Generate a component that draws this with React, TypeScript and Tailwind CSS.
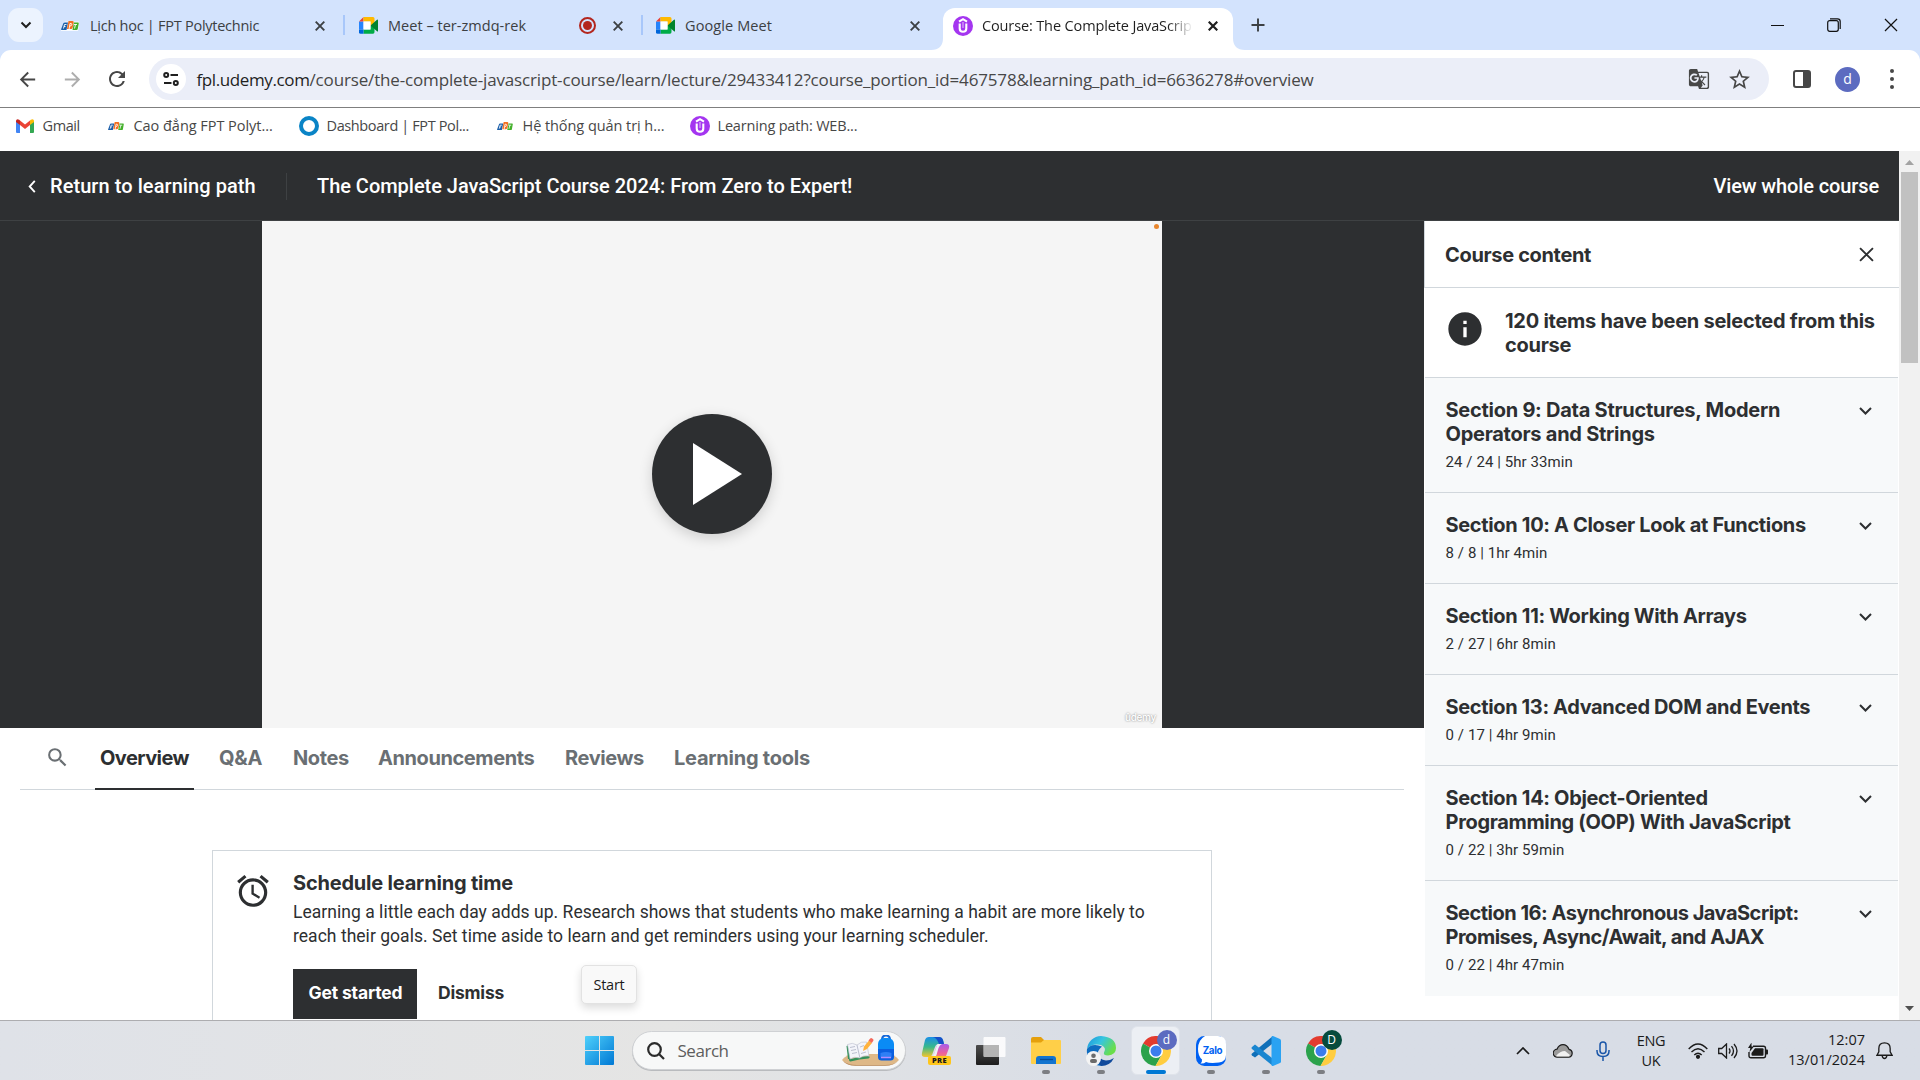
import type { ReactNode } from "react";
import {
  MdAccessAlarm,
  MdArrowBack,
  MdArrowForward,
  MdGTranslate,
  MdInfo,
  MdRefresh,
  MdSearch,
  MdStarBorder,
} from "react-icons/md";

function FptLogo({ className }: { className: string }) {
  return (
    <svg viewBox="0 0 36 24" className={className}>
      <path d="M8 3h30l-4 19H-2z" fill="#fff" fillOpacity=".8" />
      <path d="M5 6q1-1 3-1h6l-3 15H1q-1 0-.7-2z" fill="#1b5faa" />
      <path d="M15 2h8q3 0 2.400 3l-2 10q-.6 3-3.500 3h-8z" fill="#f26f21" />
      <path d="M26 5h8q2 0 1.500 2l-2 11q-.5 2-2.500 2h-8z" fill="#43b02a" />
      <path d="M5 17l2-8h4M6 13h3M16 19l2-12h2q2 0 1.500 2.500T18 12M26 9h6M29 9l-2 8" stroke="#fff" strokeWidth="1.800" fill="none" />
    </svg>
  );
}

function MeetLogo() {
  return (
    <svg viewBox="0 0 20 17" className="h-[17px] w-5 shrink-0">
      <path d="M0 4.500h4.500v8H0z" fill="#2684fc" />
      <path d="M4.500 0v4.500H0z" fill="#ea4335" />
      <path d="M4.500 0H14q1.500 0 1.500 1.500V8l-4 1V4.500h-7z" fill="#ffba00" />
      <path d="M4.500 12.500h7V9l4-1v7q0 1.700-1.500 1.700H4.500z" fill="#00ac47" />
      <path d="M0 12.500h4.500v4.200H1.500Q0 16.700 0 15.200z" fill="#0066da" />
      <path d="M11.500 8.500L18 2.700q1-.7 1 .6v10.400q0 1.300-1 .6z" fill="#00832d" />
      <path d="M4.500 4.500h7v8h-7z" fill="#fff" />
    </svg>
  );
}

function UdemyLogo() {
  return (
    <svg viewBox="0 0 20 20" className="size-5 shrink-0">
      <circle cx="10" cy="10" r="10" fill="#a435f0" />
      <path d="M6 5.600L10 3.200l4 2.400M6.700 7.500v5q0 3.300 3.300 3.300t3.300-3.300v-5" fill="none" stroke="#fff" strokeWidth="2.100" />
      <path d="M10 6v6" stroke="#fff" strokeOpacity=".55" strokeWidth="1.300" />
    </svg>
  );
}

function Cross({ className }: { className: string }) {
  return (
    <svg viewBox="0 0 10 10" className={className} stroke="currentColor" fill="none">
      <path d="M.7.7l8.600 8.600M9.300.7L.7 9.300" vectorEffect="non-scaling-stroke" />
    </svg>
  );
}

function Tab({ className, icon, label, labelClass, extra }: { className: string; icon: ReactNode; label: string; labelClass: string; extra?: ReactNode }) {
  return (
    <div className={`flex h-[35px] items-center text-[14.5px] text-[#3c4043] ${className}`}>
      {icon}
      <span className={`whitespace-nowrap ${labelClass}`}>{label}</span>
      <span className="flex-1" />
      {extra}
      <Cross className="size-[10px] text-[#3c4043] stroke-[1.900]" />
    </div>
  );
}

function TabStrip() {
  return (
    <div className="flex h-[50px] shrink-0 items-start bg-[#d3e3fd] pt-2">
      <button className="ml-2 flex h-[34px] w-[35px] items-center justify-center rounded-[11px] bg-[#ecf3fe]">
        <svg viewBox="0 0 12 8" className="h-2 w-3"><path d="M1.500 1.500L6 6l4.500-4.500" fill="none" stroke="#1f1f1f" strokeWidth="2" /></svg>
      </button>
      <Tab className="w-[300px] pr-[18px] pl-[18px]" icon={<FptLogo className="mr-[11px] h-3 w-[18px]" />} label="Lịch học | FPT Polytechnic" labelClass="tracking-[-0.26px]" />
      <i className="mt-[7px] h-5 w-[2px] bg-[#a8c7fa]" />
      <Tab
        className="w-[296px] pr-[18px] pl-[14px]"
        icon={<span className="mr-[9px] flex"><MeetLogo /></span>}
        label="Meet – ter-zmdq-rek"
        labelClass="tracking-[0.03px]"
        extra={<span className="mr-[17px] flex size-[17px] items-center justify-center rounded-full border-2 border-[#b3261e]"><i className="size-[9px] rounded-full bg-[#b3261e]" /></span>}
      />
      <i className="mt-[7px] h-5 w-[2px] bg-[#a8c7fa]" />
      <Tab className="w-[300px] pr-[23px] pl-[13px]" icon={<span className="mr-[9px] flex"><MeetLogo /></span>} label="Google Meet" labelClass="tracking-[0.1px]" />
      <div className="relative h-[42px] w-[290px] rounded-t-[12px] bg-white">
        <svg viewBox="0 0 12 12" className="absolute bottom-0 -left-3 size-3"><path d="M12 0v12H0Q12 12 12 0z" fill="#fff" /></svg>
        <svg viewBox="0 0 12 12" className="absolute -right-3 bottom-0 size-3"><path d="M0 0v12h12Q0 12 0 0z" fill="#fff" /></svg>
        <div className="flex h-[35px] items-center pl-[10px] text-[14.5px] text-[#1f1f1f]">
          <UdemyLogo />
          <span className="ml-[9px] w-[211px] overflow-hidden bg-linear-to-r from-[#1f1f1f] from-88% to-transparent bg-clip-text tracking-[-0.13px] whitespace-nowrap text-transparent">Course: The Complete JavaScrip</span>
          <Cross className="ml-[15px] size-[10px] stroke-[2.200]" />
        </div>
      </div>
      <svg viewBox="0 0 14 14" className="mt-[10px] ml-[18px] size-[14px]"><path d="M7 .5v13M.5 7h13" stroke="#3c4043" strokeWidth="1.900" /></svg>
      <div className="ml-auto flex h-[34px] items-center text-[#111]">
        <i className="h-px w-[13px] bg-[#111]" />
        <svg viewBox="0 0 14 14" className="mr-[43px] ml-[43px] size-[14px]" fill="none" stroke="#111" strokeWidth="1.200">
          <rect x=".7" y="2.700" width="10.600" height="10.600" rx="2" />
          <path d="M3 .8h7.500q2.700 0 2.700 2.700V11" />
        </svg>
        <Cross className="mr-[22px] size-[14px] stroke-[1.200]" />
      </div>
    </div>
  );
}

function Toolbar() {
  return (
    <div className="bg-[#d3e3fd]">
      <div className="flex h-[58px] items-center rounded-t-[11px] border-b border-[#7f7f7f] bg-white pt-px text-[#474747]">
        <MdArrowBack className="ml-4 size-[23px]" />
        <MdArrowForward className="ml-[22px] size-[23px] text-[#adadad]" />
        <MdRefresh className="ml-[21px] size-[24px]" />
        <div className="ml-[20px] flex h-[42px] w-[1620px] items-center rounded-full bg-[#ebeef8] pl-[7px]">
          <span className="flex size-[30px] items-center justify-center rounded-full bg-white">
            <svg viewBox="0 0 16 14" className="h-[14px] w-4" fill="none" stroke="#1f1f1f" strokeWidth="2">
              <circle cx="3.200" cy="3" r="2" /><path d="M7.500 3H15M1 11h7.500" /><circle cx="12.800" cy="11" r="2" />
            </svg>
          </span>
          <span className="ml-[10.5px] pt-px text-[17px] tracking-[-0.155px] whitespace-nowrap">
            <span className="tracking-[-0.39px] text-[#1f1f1f]">fpl.udemy.com</span>/course/the-complete-javascript-course/learn/lecture/29433412?course_portion_id=467578&amp;learning_path_id=6636278#overview
          </span>
          <MdGTranslate className="ml-auto size-[22px]" />
          <MdStarBorder className="mr-[17px] ml-[17px] size-[25px]" />
        </div>
        <span className="ml-[24px] flex h-[18px] w-[18px] justify-end rounded-[3px] border-2 border-[#474747]"><i className="w-[6px] bg-[#474747]" /></span>
        <span className="ml-[24px] flex size-[25px] items-center justify-center rounded-full bg-[#5c6bc0] pb-px text-[14px] text-white">d</span>
        <span className="ml-[30px] flex flex-col gap-[4px]">
          <i className="size-1 rounded-full bg-[#474747]" /><i className="size-1 rounded-full bg-[#474747]" /><i className="size-1 rounded-full bg-[#474747]" />
        </span>
      </div>
    </div>
  );
}

function Bookmarks() {
  return (
    <div className="flex h-[43px] shrink-0 items-center bg-white pb-[7px] text-[14.5px] whitespace-nowrap text-[#474747]">
      <div className="ml-4 flex w-[92px] items-center">
        <svg viewBox="0 0 18 14" className="mr-[8.5px] h-[14px] w-[18px]">
          <path d="M0 2v11q0 1 1 1h3V5z" fill="#4285f4" /><path d="M14 5v9h3q1 0 1-1V2z" fill="#34a853" />
          <path d="M14 1.500V6l4-3V1.800Q17.500-.8 14.800.8z" fill="#fbbc04" /><path d="M0 1.800V3l4 3V1.500L3.200.8Q.5-.8 0 1.800z" fill="#c5221f" />
          <path d="M4 1.500L9 5.500l5-4V6L9 10 4 6z" fill="#ea4335" />
        </svg>
        <span className="tracking-[-0.4px]">Gmail</span>
      </div>
      <div className="flex w-[191px] items-center">
        <FptLogo className="mr-[9.5px] h-[11px] w-4" /><span className="tracking-[-0.04px]">Cao đẳng FPT Polyt...</span>
      </div>
      <div className="flex w-[198px] items-center">
        <i className="mr-[7.5px] size-[20px] rounded-full border-4 border-[#0a84c6]" /><span className="tracking-[-0.38px]">Dashboard | FPT Pol...</span>
      </div>
      <div className="flex w-[193px] items-center">
        <FptLogo className="mr-[9.5px] h-[11px] w-4" /><span className="tracking-[-0.06px]">Hệ thống quản trị h...</span>
      </div>
      <UdemyLogo />
      <span className="ml-[7.5px] tracking-[-0.18px]">Learning path: WEB...</span>
    </div>
  );
}

function CourseHeader() {
  return (
    <div className="flex h-[70px] shrink-0 items-center border-b border-[#3e4143] bg-[#2d2f31] pt-px font-['Roboto',sans-serif] text-[20px] font-medium text-white">
      <svg viewBox="0 0 8 14" className="ml-[28px] h-[13px] w-[8px]"><path d="M7 1L1.500 7 7 13" fill="none" stroke="#fff" strokeWidth="2" /></svg>
      <span className="ml-[14px] w-[236px] tracking-[0.07px]">Return to learning path</span>
      <i className="h-[27px] w-px bg-[#3e4143]" />
      <span className="ml-[30px] tracking-[-0.03px]">The Complete JavaScript Course 2024: From Zero to Expert!</span>
      <span className="mr-5 ml-auto tracking-[-0.12px]">View whole course</span>
    </div>
  );
}

function Video() {
  return (
    <div className="flex h-[507px] shrink-0 justify-center bg-[#2d2f31]">
      <div className="relative flex w-[900px] items-center justify-center bg-[#f5f5f5] pb-[2px]">
        <button className="flex size-[120px] items-center justify-center rounded-full bg-[#2d2f31] shadow-[0_4px_14px_rgba(0,0,0,0.16)]">
          <svg viewBox="0 0 49 62" className="ml-[11px] h-[62px] w-[49px]"><path d="M0 0l49 31L0 62z" fill="#fff" /></svg>
        </button>
        <i className="absolute top-[3px] right-[3px] size-[5px] rounded-full bg-[#e8862e]" />
        <span className="absolute right-[6px] bottom-[4px] font-['Inter',sans-serif] text-[10px] leading-[13px] font-medium tracking-[-0.3px] text-white [text-shadow:0_0_2px_#777]">ûdemy</span>
      </div>
    </div>
  );
}

const tabs = [
  ["Overview", "w-[119px] tracking-[-0.56px] text-[#2d2f31]"],
  ["Q&A", "w-[74px] tracking-[-0.2px]"],
  ["Notes", "w-[85px] tracking-[-0.4px]"],
  ["Announcements", "w-[187px] tracking-[-0.42px]"],
  ["Reviews", "w-[109px] tracking-[-0.4px]"],
  ["Learning tools", "tracking-[-0.24px]"],
];

function CourseTabs() {
  return (
    <div className="mx-5 flex h-[62px] shrink-0 border-b border-[#d1d7dc] pt-[15px] font-['Inter',sans-serif] text-[20px] leading-[31px] font-bold text-[#6a6f73]">
      <MdSearch className="mt-[2px] mr-[26px] ml-[25px] size-[25px] shrink-0 text-[#6a6f73]" />
      {tabs.map(([label, cls], i) => (
        <div key={label} className={`relative shrink-0 whitespace-nowrap ${i === 0 ? "ml-[4px]" : ""} ${cls}`}>
          {label}
          {i === 0 && <i className="absolute -bottom-px -left-[5px] h-[2px] w-[99px] bg-[#2d2f31]" />}
        </div>
      ))}
    </div>
  );
}

function ScheduleCard() {
  return (
    <div className="mx-auto mt-[60px] flex h-[220px] w-[1000px] border border-[#d1d7dc] pt-[20px] pl-[21px] text-[#2d2f31]">
      <MdAccessAlarm className="mt-px mr-[21px] size-[38px] shrink-0" />
      <div>
        <h2 className="font-['Inter',sans-serif] text-[20px] leading-6 font-bold tracking-[-0.2px]">Schedule learning time</h2>
        <p className="mt-[5px] font-['Roboto',sans-serif] text-[17.5px] leading-6 tracking-[0.03px] whitespace-nowrap">
          Learning a little each day adds up. Research shows that students who make learning a habit are more likely to
          <br />
          reach their goals. Set time aside to learn and get reminders using your learning scheduler.
        </p>
        <div className="mt-[21px] flex h-[50px] items-center font-['Inter',sans-serif] text-[17.5px] font-bold">
          <button className="h-full w-[124px] bg-[#2d2f31] pb-px pl-px tracking-[-0.16px] whitespace-nowrap text-white">Get started</button>
          <button className="ml-[21px] pb-px tracking-[-0.2px]">Dismiss</button>
        </div>
      </div>
    </div>
  );
}

const sections = [
  { lines: ["Section 9: Data Structures, Modern", "Operators and Strings"], meta: "24 / 24 | 5hr 33min", tracking: "tracking-[-0.26px]" },
  { lines: ["Section 10: A Closer Look at Functions"], meta: "8 / 8 | 1hr 4min", tracking: "tracking-[-0.33px]" },
  { lines: ["Section 11: Working With Arrays"], meta: "2 / 27 | 6hr 8min", tracking: "tracking-[-0.33px]" },
  { lines: ["Section 13: Advanced DOM and Events"], meta: "0 / 17 | 4hr 9min", tracking: "tracking-[-0.36px]" },
  { lines: ["Section 14: Object-Oriented", "Programming (OOP) With JavaScript"], meta: "0 / 22 | 3hr 59min", tracking: "tracking-[-0.33px]" },
  { lines: ["Section 16: Asynchronous JavaScript:", "Promises, Async/Await, and AJAX"], meta: "0 / 22 | 4hr 47min", tracking: "tracking-[-0.5px]" },
];

function Sidebar() {
  return (
    <aside className="flex w-[475px] shrink-0 flex-col bg-white font-['Inter',sans-serif] text-[20px] leading-6 font-bold text-[#2d2f31]">
      <div className="flex h-[67px] shrink-0 items-center justify-between border-b border-l border-[#d1d7dc] pt-px pl-5 tracking-[-0.34px]">
        Course content
        <Cross className="mr-[25px] size-[15px] stroke-[1.900]" />
      </div>
      <div className="mx-px flex h-[90px] shrink-0 border-b border-[#d1d7dc] pt-[21px] pl-5 tracking-[-0.26px] whitespace-nowrap">
        <MdInfo className="mr-[20px] size-10 shrink-0" />
        <div>120 items have been selected from this<br />course</div>
      </div>
      {sections.map((s, i) => (
        <div key={s.meta} className={`mx-px flex shrink-0 justify-between bg-[#f7f9fa] pt-5 pr-[26px] pl-[20.5px] ${s.lines.length > 1 ? "h-[115px]" : "h-[91px]"} ${i < 5 ? "border-b border-[#d1d7dc]" : ""}`}>
          <div className="whitespace-nowrap">
            {s.lines.map((l) => <div key={l} className={s.tracking}>{l}</div>)}
            <div className="mt-[6px] font-['Roboto',sans-serif] text-[15px] leading-[21px] font-normal tracking-[0.08px]">{s.meta}</div>
          </div>
          <svg viewBox="0 0 13 8" className="mt-[9px] h-2 w-[13px]"><path d="M1 1l5.500 5.500L12 1" fill="none" stroke="#2d2f31" strokeWidth="2" /></svg>
        </div>
      ))}
    </aside>
  );
}

function Scrollbar() {
  return (
    <div className="flex w-[21px] shrink-0 flex-col items-center bg-[#f1f1f1]">
      <svg viewBox="0 0 9 5" className="mt-[9px] mb-[7px] h-[5px] w-[9px]"><path d="M0 5l4.500-5L9 5z" fill="#a3a3a3" /></svg>
      <div className="h-[191px] w-[17px] bg-[#c1c1c1]" />
      <svg viewBox="0 0 9 5" className="mt-auto mb-[9px] h-[5px] w-[9px]"><path d="M0 0l4.500 5L9 0z" fill="#505050" /></svg>
    </div>
  );
}

function ChromeLogo() {
  return (
    <svg viewBox="0 0 30 30" className="size-[30px]">
      <path d="M15 15L2 7.500A15 15 0 0 1 28 7.500L28.500 8.500H15z" fill="#e33b2e" />
      <path d="M15 15L21 18.500 14.500 30A15 15 0 0 1 2 7.500z" fill="#2ba24c" />
      <path d="M15 8.500H28.500A15 15 0 0 1 14.500 30L21 18.500z" fill="#ffcd40" />
      <circle cx="15" cy="15" r="7" fill="#fff" />
      <circle cx="15" cy="15" r="5.500" fill="#3b7ded" />
    </svg>
  );
}

function AppCell({ children, active, idle }: { children: ReactNode; active?: boolean; idle?: boolean }) {
  return (
    <div className="relative flex h-full w-[55px] items-center justify-center">
      {active && <i className="absolute inset-x-[3px] inset-y-[5px] rounded-[6px] border border-[#dfe3ea] bg-[#eceff4]" />}
      <span className="relative flex size-[30px] items-center justify-center">{children}</span>
      {!idle && <i className={`absolute bottom-[6px] h-1 rounded-full ${active ? "w-5 bg-[#0078d4]" : "w-2 bg-[#7c7e83]"}`} />}
    </div>
  );
}

function Taskbar() {
  return (
    <div className="flex h-[60px] shrink-0 items-center border-t border-[#adadb0] bg-linear-to-r from-[#dfe2e8] via-[#e5e5e4] via-35% to-[#d8dde6] to-58% text-[#1b1b1b]">
      <svg viewBox="0 0 29 29" className="ml-[585px] size-[29px] shrink-0">
        <defs><linearGradient id="win" x1="0" y1="0" x2="1" y2="1"><stop stopColor="#4fd0fb" /><stop offset="1" stopColor="#0078d4" /></linearGradient></defs>
        <path d="M1 0h13v14H0V1q0-1 1-1zM15 0h13q1 0 1 1v13H15zM0 15h14v14H1q-1 0-1-1zM15 15h14v13q0 1-1 1H15z" fill="url(#win)" />
      </svg>
      <div className="mr-[2.5px] ml-[17.5px] flex h-[39px] w-[274px] shrink-0 items-center rounded-full border border-[#cfd1d4] bg-[#f7f8f8] pl-[14px] shadow-[0_1px_0_#b9bbbe]">
        <svg viewBox="0 0 18 18" className="size-[18px]" fill="none" stroke="#2b2b2b" strokeWidth="2.200"><circle cx="7.500" cy="7.500" r="6.300" /><path d="M12 12l5 5" /></svg>
        <span className="ml-[13px] text-[17px] tracking-[-0.46px] text-[#5d5d5d]">Search</span>
        <svg viewBox="0 0 57 31" className="mr-[6px] ml-auto h-[31px] w-[57px]">
          <path d="M0 25q4-6 14-6h30q9 0 13 6-5 5.500-14 5.500H13Q4 30 0 25z" fill="#deb887" />
          <path d="M1 26q5 4 14 4h28q9 0 13-4-4 4.800-13 4.800H14Q5 31 1 26z" fill="#b98a5e" />
          <path d="M6 24L4.500 11 7 10l2 14 8-2 9-1 2 1-1.500 1.500-9 1-9 2q-1.500.3-1.500-2.500z" fill="#34915a" />
          <path d="M5.500 9.500q5-2.500 9.500.5 4-4 9.500-3l2.500 14q-5.500-1-9.500 2-5-2-9.500 1z" fill="#f3f4fa" stroke="#b8bccb" strokeWidth=".6" />
          <path d="M15 10l2.800 12.500M8 12.500l5-1M9 15.500l5-1M10 18.500l5-1M18 12l4-1.500M19 18.500l5-1.500" stroke="#a3a9bd" strokeWidth=".7" />
          <path d="M21 16l1-4.500 5-6 3 2.500-5 6z" fill="#ffb23e" /><path d="M26.500 5.500l1.700-2q1-1 2 0l1 .8q.8 1-.2 2L29.800 8z" fill="#f4695c" />
          <path d="M40 5q0-4.500 4-4.500T48 5" fill="none" stroke="#1668d8" strokeWidth="2" />
          <rect x="36" y="3" width="16" height="22" rx="6" fill="#0a8bf5" />
          <path d="M36 14h16v8q0 3.500-3.500 3.500h-9Q36 25.500 36 22z" fill="#0b5fe0" />
          <path d="M38.500 18q5.500-2 11 0v4q0 1-1 1h-9q-1 0-1-1z" fill="#2f7ff5" /><path d="M39 22.500h10" stroke="#b38cff" strokeWidth="1.500" />
        </svg>
      </div>
      <AppCell idle>
        <svg viewBox="0 0 30 30" className="size-[30px]">
          <defs>
            <linearGradient id="cpa" x1="0" y1="0" x2="0" y2="1"><stop stopColor="#1a8fe8" /><stop offset=".5" stopColor="#38b98a" /><stop offset="1" stopColor="#f5c52c" /></linearGradient>
            <linearGradient id="cpb" x1="0" y1="0" x2="0" y2="1"><stop stopColor="#a65ceb" /><stop offset=".6" stopColor="#ec5f9d" /><stop offset="1" stopColor="#f79a55" /></linearGradient>
          </defs>
          <path d="M8 1h10q3 0 4 3l1 4h-5q-3 0-4 3l-3 8q-1 2-3 2H4q-4 0-3-4L4 4q1-3 4-3z" fill="url(#cpa)" />
          <path d="M12 1h6q3 0 4 3l1 4h-5q-2-6-6-7z" fill="#1650c8" />
          <path d="M18 8h7q4 0 3 4l-3 8q-1 3-4 3H9q3-1 4-4l2-7q1-4 3-4z" fill="url(#cpb)" />
          <path d="M17 8h4q-2.500 1-3.500 4l-2 7q-.7 2-2 2h-3q1.500 0 2.500-3l2-6q1-4 2-4z" fill="#eef1f6" />
          <rect x="7" y="20" width="23" height="9" rx="2" fill="#ffc61a" />
          <text x="18.500" y="27.200" textAnchor="middle" fontFamily="Open Sans" fontSize="7.500" fontWeight="800" letterSpacing=".3" fill="#1b1b1b">PRE</text>
        </svg>
      </AppCell>
      <AppCell idle>
        <svg viewBox="0 0 30 28" className="h-7 w-[30px]">
          <defs><linearGradient id="tv" x1="0" y1="0" x2="0" y2="1"><stop stopColor="#4c4c4c" /><stop offset="1" stopColor="#1d1d1d" /></linearGradient></defs>
          <rect x="0" y="8" width="23" height="20" rx="1" fill="url(#tv)" /><rect x="7.500" y="0" width="22" height="20" rx="1" fill="#fff" fillOpacity=".85" />
          <path d="M8 8h15v12H8z" fill="#a9a9a9" fillOpacity=".8" />
        </svg>
      </AppCell>
      <AppCell>
        <svg viewBox="0 0 30 27" className="h-[27px] w-[30px]">
          <path d="M0 2q0-2 2-2h8l3 3v6H0z" fill="#e5a00d" /><path d="M0 5.500h10L13 3h16q1 0 1 1v22q0 1-1 1H1q-1 0-1-1z" fill="#ffcf48" />
          <path d="M5 27v-5q0-3 3-3h14q3 0 3 3v5z" fill="#1374cf" /><path d="M9 22.500h13" stroke="#0a4c94" strokeWidth="1.300" />
        </svg>
      </AppCell>
      <AppCell>
        <svg viewBox="0 0 30 30" className="size-[30px]">
          <defs>
            <linearGradient id="eda" x1="0" y1="0" x2="1" y2=".5"><stop stopColor="#1a93dc" /><stop offset=".5" stopColor="#36c5e0" /><stop offset="1" stopColor="#6ade4a" /></linearGradient>
          </defs>
          <path d="M1 13A14.500 14.500 0 0 1 15 0q15 1 15 12 0 7-8 7.500-5 0-4-3 3-5-3-7.500Q6 7 1 13z" fill="url(#eda)" />
          <path d="M1 13Q0 22 6 27q6 4 12 2-6-3-7-9 0-5 5-9.500Q6 6.500 1 13z" fill="#0e6cc0" />
          <path d="M11 17q2 7 9 7.500 4 0 8-2.500-4 8-13 8-5-4-4-13z" fill="#114a9c" />
          <circle cx="7.500" cy="22.500" r="7.500" fill="#f3f3f3" /><circle cx="7.500" cy="19.800" r="2.300" fill="#6b6b6b" /><rect x="4" y="23" width="7" height="4" rx="2" fill="#6b6b6b" />
        </svg>
      </AppCell>
      <AppCell active>
        <ChromeLogo />
        <i className="absolute -top-[6px] left-[16px] flex size-5 items-center justify-center rounded-full bg-[#5c6bc0] text-[12px] text-white not-italic">d</i>
      </AppCell>
      <AppCell>
        <svg viewBox="0 0 30 30" className="size-[30px]">
          <rect width="30" height="30" rx="8.500" fill="#0061f2" />
          <path d="M9 0h13q8 0 8 8v11q0 7-7 7.500-9 1-13-.5-2 1.800-5.500 1.500 1.800-1.500 1.500-4Q2 20 2 13 2 4 9 0z" fill="#fff" />
          <text x="16.500" y="17.500" textAnchor="middle" fontFamily="Inter" fontSize="9.800" fontWeight="700" letterSpacing="-.3" fill="#0061f2">Zalo</text>
        </svg>
      </AppCell>
      <AppCell>
        <svg viewBox="0 0 30 30" className="size-[30px]">
          <path d="M22 0l-1 8L4 21.500l-3-2q-1-1 0-2z" fill="#0f6fb8" /><path d="M1 11q-1 1 0 2l21 17-1-8L4 8.500z" fill="#1a86d0" />
          <path d="M22 0l7 3q1 .5 1 1.500v21q0 1-1 1.500l-7 3q-1 .3-1.500-1V1Q21-.3 22 0z" fill="#2aa2f2" />
        </svg>
      </AppCell>
      <AppCell>
        <ChromeLogo />
        <i className="absolute -top-[6px] left-[16px] flex size-5 items-center justify-center rounded-full bg-[#064b3d] text-[12px] text-white not-italic">D</i>
      </AppCell>
      <svg viewBox="0 0 14 8" className="ml-auto h-2 w-[14px]"><path d="M1 7l6-6 6 6" fill="none" stroke="#1b1b1b" strokeWidth="1.700" /></svg>
      <svg viewBox="0 0 20 14" className="ml-[23px] h-[14px] w-5">
        <path d="M4.500 13.200a4 4 0 0 1-.5-8Q6 .7 10 .7t6 4.600a4 4 0 0 1-.5 7.900z" fill="#9b9b9b" stroke="#1b1b1b" strokeWidth="1.200" />
        <path d="M3 12q4-5 9-5l5 4-1 1.500H4z" fill="#f1f1f1" />
      </svg>
      <svg viewBox="0 0 14 20" className="ml-[23px] h-5 w-[14px]" fill="none" stroke="#1a56a8" strokeWidth="1.500"><rect x="4" y="1" width="6" height="11.500" rx="3" /><path d="M1 9v1q0 5.500 6 5.500T13 10V9M7 15.500V20" /></svg>
      <div className="ml-[26px] w-[30px] text-center text-[14.5px] leading-5 tracking-[-0.3px]">ENG<br />UK</div>
      <svg viewBox="0 0 20 16" className="ml-[22px] h-4 w-5" fill="none" stroke="#1b1b1b" strokeWidth="1.400"><path d="M.7 6Q10-4 19.300 6M3.500 9q6.500-6.500 13 0M6.300 12q3.700-3.700 7.400 0" /><circle cx="10" cy="13.800" r="1.400" fill="#1b1b1b" /></svg>
      <svg viewBox="0 0 20 16" className="ml-[10px] h-4 w-5" fill="none" stroke="#1b1b1b" strokeWidth="1.300"><path d="M.7 5.500h3L8.500 1v14l-4.800-4.500h-3zM11 5.500q2 2.500 0 5M13.500 3.200q4 4.800 0 9.600M16 1q6 7 0 14" /></svg>
      <svg viewBox="0 0 20 16" className="ml-[10px] h-4 w-5"><path d="M5 3.200h10.500q2 0 2 2v7.600q0 2-2 2H3q-2 0-2-2V9" fill="none" stroke="#1b1b1b" strokeWidth="1.400" /><path d="M7 5.200h7.500q1 0 1 1v5.600q0 1-1 1h-10q-1 0-1-1V10z" fill="#1b1b1b" /><path d="M18 6.500h1.200q.8 0 .8 1v3q0 1-.8 1H18zM3.500-.5L0 5h2.300L1.500 9 6 3.500H3.500z" fill="#1b1b1b" /></svg>
      <div className="ml-[19px] w-[79px] pr-px pb-px text-right text-[14.5px] leading-5 whitespace-nowrap">12:07<br />13/01/2024</div>
      <svg viewBox="0 0 18 19" className="mr-[27px] ml-[10px] h-[19px] w-[17px]" fill="none" stroke="#1b1b1b" strokeWidth="1.400"><path d="M1 14.500L3 11V7.500q0-6 6-6t6 6V11l2 3.500zM6.500 15q.5 3 2.500 3t2.500-3" /></svg>
    </div>
  );
}

export default function App() {
  return (
    <div className="relative flex h-[1080px] w-[1920px] flex-col overflow-hidden bg-white font-['Open_Sans',sans-serif]">
      <TabStrip />
      <Toolbar />
      <Bookmarks />
      <div className="flex h-[869px] shrink-0">
        <div className="flex w-[1899px] shrink-0 flex-col overflow-hidden">
          <CourseHeader />
          <div className="flex flex-1">
            <main className="flex w-[1424px] shrink-0 flex-col overflow-hidden">
              <Video />
              <CourseTabs />
              <ScheduleCard />
            </main>
            <Sidebar />
          </div>
        </div>
        <Scrollbar />
      </div>
      <Taskbar />
      <div className="absolute top-[965px] left-[581px] flex h-[39px] w-14 items-center justify-center rounded-[5px] border border-[#e2e2e2] bg-[#f9f9f9] text-[14.5px] tracking-[-0.26px] text-[#1b1b1b] shadow-[0_4px_8px_rgba(0,0,0,0.14)]">Start</div>
    </div>
  );
}
